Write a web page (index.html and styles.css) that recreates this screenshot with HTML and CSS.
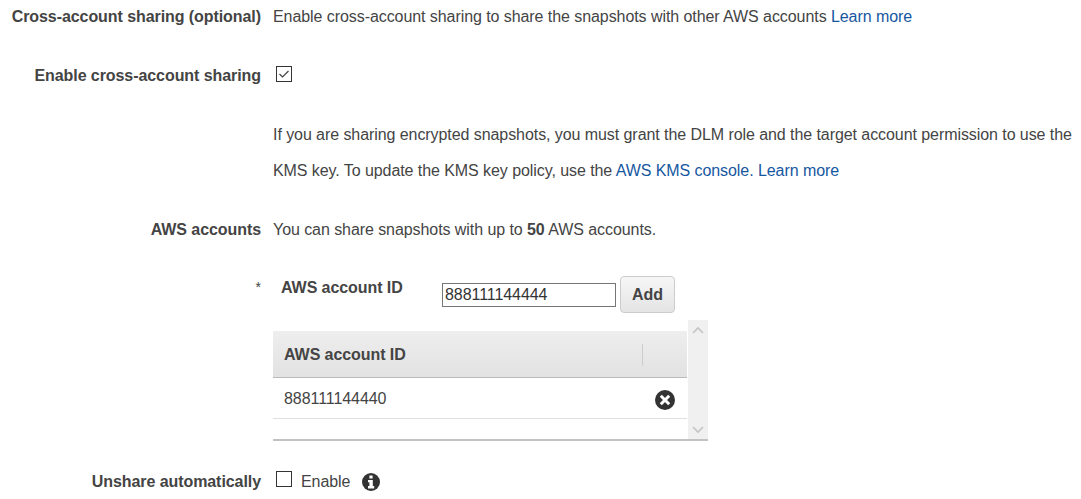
FILE: index.html
```html
<!DOCTYPE html>
<html lang="en">
<head>
<meta charset="utf-8">
<title>Cross-account sharing</title>
<link rel="stylesheet" href="styles.css">
</head>
<body>
<main class="form">
  <div class="row row-intro">
    <div class="label">Cross-account sharing (optional)</div>
    <div class="value">Enable cross-account sharing to share the snapshots with other AWS accounts <a href="#">Learn more</a></div>
  </div>
  <div class="row row-enable">
    <div class="label">Enable cross-account sharing</div>
    <div class="value">
      <span class="check">
        <svg width="16" height="16" viewBox="0 0 16 16"><path d="M3.5 8l3 3L12.5 5" fill="none" stroke="#444" stroke-width="1.2"/></svg>
      </span>
    </div>
  </div>
  <div class="row row-note">
    <div class="label"></div>
    <div class="value note">If you are sharing encrypted snapshots, you must grant the DLM role and the target account permission to use the<br>KMS key. To update the KMS key policy, use the <a href="#">AWS KMS console.</a> <a href="#">Learn more</a></div>
  </div>
  <div class="row row-accounts">
    <div class="label">AWS accounts</div>
    <div class="value">You can share snapshots with up to <b>50</b> AWS accounts.</div>
  </div>
  <div class="row row-id">
    <div class="label"><span class="star">*</span></div>
    <div class="value id-line">
      <span class="id-label">AWS account ID</span>
      <input class="id-input" type="text" value="888111144444">
      <button class="add" type="button">Add</button>
    </div>
  </div>
  <div class="row row-table">
    <div class="label"></div>
    <div class="table-wrap">
      <div class="table-main">
        <div class="thead"><span>AWS account ID</span><i class="divider"></i></div>
        <div class="tr">
          <span class="cell">888111144440</span>
          <svg class="remove" width="20" height="20" viewBox="0 0 20 20"><circle cx="10" cy="10" r="10" fill="#333"/><path d="M5.8 5.8l8.4 8.4M14.2 5.8l-8.4 8.4" stroke="#fff" stroke-width="3"/></svg>
        </div>
      </div>
      <div class="scrollbar">
        <svg width="14" height="8" viewBox="0 0 14 8"><path d="M2 7l5-5 5 5" fill="none" stroke="#c4c4c4" stroke-width="1.6"/></svg>
        <svg width="14" height="8" viewBox="0 0 14 8"><path d="M2 1l5 5 5-5" fill="none" stroke="#c4c4c4" stroke-width="1.6"/></svg>
      </div>
    </div>
  </div>
  <div class="row row-unshare">
    <div class="label">Unshare automatically</div>
    <div class="value unshare">
      <span class="check"></span>
      <span class="enable">Enable</span>
      <svg class="info" width="18" height="18" viewBox="0 0 18 18"><circle cx="9" cy="9" r="9" fill="#333"/><path d="M7.4 2.6h3.2v2.8H7.4zM6 7h4.8v6h1.4v2.4H6v-2.4h1.4V9.3H6z" fill="#fff"/></svg>
    </div>
  </div>
</main>
</body>
</html>
```
FILE: styles.css
```css
* { box-sizing: border-box; }
html, body { margin: 0; padding: 0; background: #fff; }
body {
  width: 1081px;
  height: 499px;
  overflow: hidden;
  font-family: "Liberation Sans", Arial, sans-serif;
  font-size: 16px;
  line-height: 20px;
  letter-spacing: -0.07px;
  color: #444;
}
a { color: #16589f; text-decoration: none; }
.row { display: flex; column-gap: 12px; }
.label {
  flex: 0 0 261px;
  text-align: right;
  font-weight: bold;
}
.value { flex: 1 1 auto; white-space: nowrap; }
.row-intro { padding-top: 7px; }
.row-enable { padding-top: 39px; }
.check {
  display: block;
  width: 16px;
  height: 16px;
  margin-left: 3px;
  border: 1px solid #333;
  background: #fff;
}
.check svg { display: block; margin: -1px; }
.row-note { padding-top: 31px; }
.note { line-height: 36px; }
.row-accounts { padding-top: 31px; }
.row-id { padding-top: 37px; height: 80px; }
.star { font-weight: normal; font-size: 14px; }
.id-line { display: flex; align-items: flex-start; }
.id-label { font-weight: bold; margin-left: 8px; margin-top: 1px; width: 161px; }
.id-input {
  width: 174px;
  height: 24px;
  margin-top: 6px;
  padding: 0 2px;
  border: 1px solid #767676;
  font: inherit;
  letter-spacing: inherit;
  color: #333;
  outline: none;
}
.add {
  width: 55px;
  height: 37px;
  margin-left: 4px;
  margin-top: -1px;
  padding: 0;
  border: 1px solid #ccc;
  border-radius: 4px;
  background: linear-gradient(#f6f6f6, #e4e4e4);
  font: bold 16px "Liberation Sans", Arial, sans-serif;
  color: #444;
}
.table-wrap {
  display: flex;
  width: 435px;
  height: 121px;
  border-bottom: 2px solid #c2c2c2;
}
.table-main { width: 415px; padding: 11px 1px 0 0; }
.thead {
  display: flex;
  align-items: center;
  justify-content: space-between;
  height: 47px;
  padding: 2px 44px 0 11px;
  background: linear-gradient(#eeeeee, #e2e2e2);
  border-bottom: 1px solid #bbb;
  font-weight: bold;
}
.divider { display: block; width: 1px; height: 22px; background: #ccc; }
.tr {
  display: flex;
  align-items: center;
  justify-content: space-between;
  height: 41px;
  padding: 3px 12px 0 11px;
  border-bottom: 1px solid #e0e0e0;
}
.cell { margin-bottom: 2px; }
.scrollbar {
  width: 20px;
  background: #f0f0f0;
  display: flex;
  flex-direction: column;
  align-items: center;
  justify-content: space-between;
  padding: 6px 0 5px;
}
.scrollbar svg { display: block; }
.row-unshare { padding-top: 31px; }
.unshare { display: flex; align-items: center; }
.unshare .check { margin-top: -7px; }
.enable { margin-left: 9px; }
.info { margin-left: 12px; margin-top: -1px; }
```
